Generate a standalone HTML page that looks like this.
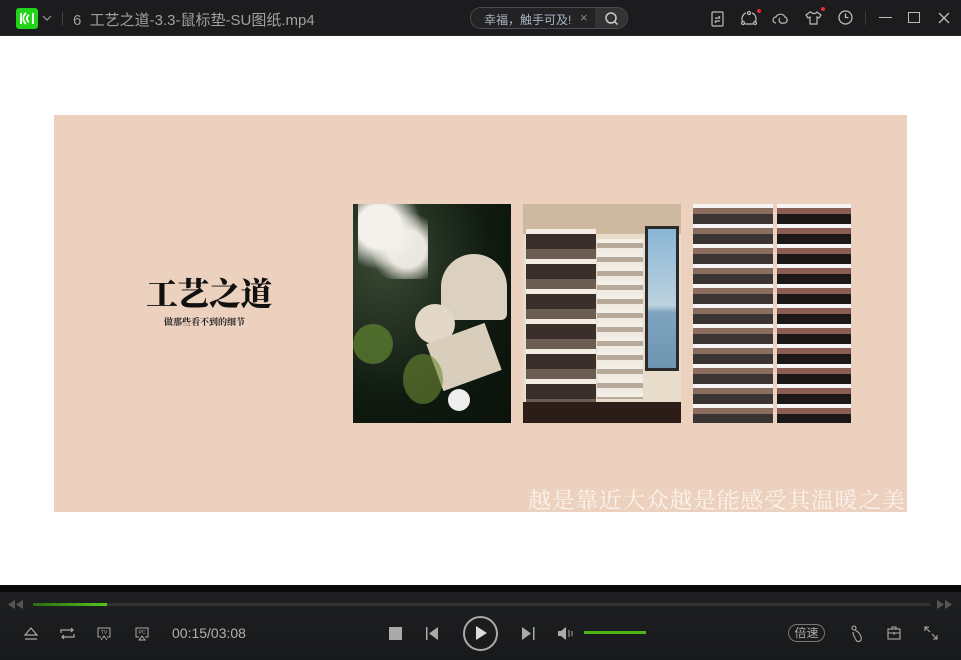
<!DOCTYPE html>
<html><head><meta charset="utf-8"><style>
*{margin:0;padding:0;box-sizing:border-box}
body{width:961px;height:660px;overflow:hidden;background:#fff;font-family:"Liberation Sans","Noto Sans CJK SC",sans-serif;position:relative}
.abs{position:absolute}
#top{left:0;top:0;width:961px;height:36px;background:#1c1c1e;border-bottom:1px solid #2a2a2c}
#ctrl{left:0;top:585px;width:961px;height:75px;background:linear-gradient(#0a0a0a 0,#0a0a0a 7px,#1e1f21 7px,#18191b 100%)}
.gray{color:#a8a8a8}
svg{position:absolute;overflow:visible}
</style></head><body>
<div id="top" class="abs">
  <div class="abs" style="left:16px;top:8px;width:22px;height:21px;background:#23d319;border-radius:3px"></div>
  <svg style="left:16px;top:8px" width="22" height="21" fill="none" stroke="#fff" stroke-width="1.8"><path d="M5 5v11"/><path d="M10 5a7 7 0 0 0 0 11M13 7a4 4 0 0 0 0 7"/><path d="M17 5v11"/></svg>
  <svg style="left:42px;top:15px" width="10" height="6"><path d="M1 1l4 4 4-4" fill="none" stroke="#999" stroke-width="1.2"/></svg>
  <div class="abs" style="left:62px;top:12px;width:1px;height:13px;background:#444"></div>
  <div class="abs gray" style="left:73px;top:9px;font-size:15px;color:#a0a0a0">6&nbsp; 工艺之道-3.3-鼠标垫-SU图纸.mp4</div>
  <div class="abs" style="left:470px;top:7px;width:158px;height:22px;border:1px solid #4a4a4c;border-radius:11px;background:#232325;overflow:hidden">
    <div class="abs" style="left:124px;top:0;width:34px;height:22px;background:#333335"></div>
    <div class="abs" style="left:13px;top:3px;font-size:12px;color:#a8b4c2">幸福，触手可及!</div>
    <div class="abs" style="left:109px;top:2px;font-size:13px;color:#888">×</div>
    <svg style="left:134px;top:4px" width="14" height="14"><circle cx="6" cy="6" r="5" fill="none" stroke="#ccc" stroke-width="1.5"/><path d="M9.5 9.5l3 3" stroke="#ccc" stroke-width="1.5"/></svg>
  </div>
  <svg style="left:711px;top:10px" width="14" height="17" fill="none" stroke="#bbb" stroke-width="1.2"><rect x="1" y="2" width="11" height="14" rx="1"/><path d="M4 8h5M4 11h5M8 6l1 2M5 13l-1-2"/></svg>
  <svg style="left:741px;top:11px" width="16" height="14" fill="none" stroke="#bbb" stroke-width="1.2"><path d="M5 2a6 6 0 0 0-3 9M11 2a6 6 0 0 1 3 9M4 13h8"/><circle cx="8" cy="2" r="1.5"/><circle cx="2" cy="12" r="1.5"/><circle cx="14" cy="12" r="1.5"/></svg>
  <div class="abs" style="left:757px;top:9px;width:4px;height:4px;border-radius:2px;background:#f0272b"></div>
  <svg style="left:773px;top:11px" width="16" height="14" fill="none" stroke="#bbb" stroke-width="1.2"><path d="M3 12a3 3 0 0 1 0-6a5 5 0 0 1 9 0a3 3 0 0 1-2 6a3 3 0 0 1-3-5"/></svg>
  <svg style="left:805px;top:11px" width="16" height="14" fill="none" stroke="#bbb" stroke-width="1.2"><path d="M5 1L1 4l2 3 2-1v7h7V6l2 1 2-3-4-3c-1 2-5 2-6 0z"/></svg>
  <div class="abs" style="left:821px;top:7px;width:4px;height:4px;border-radius:2px;background:#f0272b"></div>
  <svg style="left:838px;top:10px" width="15" height="15" fill="none" stroke="#bbb" stroke-width="1.3"><circle cx="7.5" cy="7.5" r="6.5"/><path d="M7.5 3.5v4h3"/></svg>
  <div class="abs" style="left:865px;top:11px;width:1px;height:14px;background:#3a3a3a"></div>
  <div class="abs" style="left:879px;top:17px;width:13px;height:1.3px;background:#bbb"></div>
  <div class="abs" style="left:908px;top:12px;width:12px;height:11px;border:1.3px solid #bbb"></div>
  <svg style="left:938px;top:12px" width="12" height="12"><path d="M1 1l10 10M11 1L1 11" stroke="#bbb" stroke-width="1.3"/></svg>
</div>

<!-- video -->
<div class="abs" style="left:54px;top:115px;width:853px;height:397px;background:#ecd1be">
  <div class="abs" style="left:92px;top:154px;font-family:'Noto Serif CJK SC','Liberation Serif',serif;font-weight:900;font-size:32px;color:#111;letter-spacing:-0.5px">工艺之道</div>
  <div class="abs" style="left:110px;top:200px;font-family:'Noto Serif CJK SC',serif;font-weight:700;font-size:9px;color:#222">做那些看不到的细节</div>
  <!-- img1 -->
  <div class="abs" style="left:299px;top:89px;width:158px;height:219px;background:radial-gradient(ellipse at 20% 25%,#3a4a34,#0f1a10 60%,#0b120b);overflow:hidden">
    <div class="abs" style="left:5px;top:0;width:70px;height:75px;background:radial-gradient(circle at 30% 30%,#f4f1ec 0 30%,transparent 60%),radial-gradient(circle at 70% 60%,#ece7e0 0 28%,transparent 55%);"></div>
    <div class="abs" style="left:88px;top:50px;width:66px;height:66px;border-radius:50% 50% 6px 6px;background:#dcd1c0"></div>
    <div class="abs" style="left:62px;top:100px;width:40px;height:40px;border-radius:50%;background:#e3d8c7"></div>
    <div class="abs" style="left:80px;top:128px;width:62px;height:50px;background:#d9cdbb;transform:rotate(-20deg)"></div>
    <div class="abs" style="left:0;top:120px;width:40px;height:40px;background:#5a7a2f;border-radius:50%;opacity:.8"></div>
    <div class="abs" style="left:50px;top:150px;width:40px;height:50px;background:#6d8a34;border-radius:50%;opacity:.6"></div>
    <div class="abs" style="left:95px;top:185px;width:22px;height:22px;border-radius:50%;background:#eee"></div>
  </div>
  <!-- img2 -->
  <div class="abs" style="left:469px;top:89px;width:158px;height:219px;background:#e8dccb;overflow:hidden">
    <div class="abs" style="left:0;top:0;width:158px;height:30px;background:#cdb9a0"></div>
    <div class="abs" style="left:3px;top:25px;width:70px;height:175px;background:repeating-linear-gradient(#f2ece2 0 5px,#3a2f2a 5px 20px,#6b5d52 20px 30px);"></div>
    <div class="abs" style="left:74px;top:35px;width:46px;height:160px;background:repeating-linear-gradient(#f4efe6 0 4px,#b8aa9a 4px 9px,#f0ebe2 9px 14px);"></div>
    <div class="abs" style="left:122px;top:22px;width:34px;height:145px;background:linear-gradient(#8ab6d6,#bdd2df 55%,#7fa4c0 60%,#6d94b0);border:3px solid #2a2a2a"></div>
    <div class="abs" style="left:0;top:198px;width:158px;height:21px;background:#2d1d18"></div>
  </div>
  <!-- img3 -->
  <div class="abs" style="left:639px;top:89px;width:80px;height:219px;background:repeating-linear-gradient(#f5f5f5 0 4px,#8a6d5f 4px 10px,#3a3432 10px 20px)"></div>
  <div class="abs" style="left:723px;top:89px;width:74px;height:219px;background:repeating-linear-gradient(#f5f5f5 0 4px,#8a5d55 4px 10px,#1c1818 10px 20px)"></div>
  <div class="abs" style="left:474px;top:369px;font-family:'Noto Serif CJK SC',serif;font-size:22px;color:#fbf3ec;white-space:nowrap;letter-spacing:0.5px;transform:scaleX(1.048);transform-origin:left">越是靠近大众越是能感受其温暖之美</div>
</div>

<div id="ctrl" class="abs">
  <svg style="left:8px;top:15px" width="16" height="9"><path d="M0 4.5l7-4.5v9zM8 4.5l7-4.5v9z" fill="#555"/></svg>
  <div class="abs" style="left:33px;top:18px;width:897px;height:3px;background:#333"></div>
  <div class="abs" style="left:33px;top:18px;width:74px;height:3px;background:linear-gradient(90deg,#2c6a12,#56c51d)"></div>
  <svg style="left:937px;top:15px" width="16" height="9"><path d="M0 0l7 4.5-7 4.5zM8 0l7 4.5-7 4.5z" fill="#555"/></svg>
  <svg style="left:24px;top:42px" width="14" height="13" fill="none" stroke="#aaa" stroke-width="1.2"><path d="M1 8L7 1l6 7zM1 12h12"/></svg>
  <svg style="left:60px;top:42px" width="15" height="13" fill="none" stroke="#aaa" stroke-width="1.2"><path d="M1 6V3h12M11 1l2 2-2 2M14 7v3H2M4 12l-2-2 2-2"/></svg>
  <svg style="left:97px;top:42px" width="14" height="13" fill="none" stroke="#aaa" stroke-width="1"><path d="M4 10H1V1h12v9h-3M4 13l3-4 3 4"/><text x="7" y="7" font-size="5" fill="#aaa" stroke="none" text-anchor="middle">TV</text></svg>
  <svg style="left:135px;top:42px" width="14" height="13" fill="none" stroke="#aaa" stroke-width="1"><path d="M4 10H1V1h12v9h-3M4 13l3-4 3 4z"/><text x="7" y="7" font-size="5" fill="#aaa" stroke="none" text-anchor="middle">PC</text></svg>
  <div class="abs" style="left:172px;top:40px;font-size:14px;color:#b0b0b0">00:15/03:08</div>
  <div class="abs" style="left:389px;top:42px;width:13px;height:13px;background:#aaa"></div>
  <svg style="left:426px;top:42px" width="13" height="13"><rect x="0" y="0" width="1.5" height="13" fill="#aaa"/><path d="M12 0v13L3 6.5z" fill="#aaa"/></svg>
  <div class="abs" style="left:463px;top:31px;width:35px;height:35px;border:2px solid #aaa;border-radius:50%"></div>
  <svg style="left:476px;top:41px" width="12" height="14"><path d="M0 0l11 7-11 7z" fill="#ddd"/></svg>
  <svg style="left:522px;top:42px" width="13" height="13"><path d="M0 0v13l9-6.5z" fill="#aaa"/><rect x="11" y="0" width="1.5" height="13" fill="#aaa"/></svg>
  <svg style="left:558px;top:42px" width="16" height="13"><path d="M0 4h3l5-4v13L3 9H0z" fill="#aaa"/><path d="M11 3v7M14 4v5" stroke="#aaa" stroke-width="1"/></svg>
  <div class="abs" style="left:584px;top:46px;width:62px;height:3px;background:#4cb617"></div>
  <div class="abs" style="left:788px;top:39px;width:37px;height:18px;border:1px solid #777;border-radius:9px;font-size:12px;color:#aaa;text-align:center;line-height:16px">倍速</div>
  <svg style="left:851px;top:40px" width="13" height="17" fill="none" stroke="#aaa" stroke-width="1.1"><circle cx="3" cy="3" r="2"/><path d="M4 5c4 2 7 6 6 10-1 2-4 2-5 0-1-3-3-4-3-8"/></svg>
  <svg style="left:887px;top:41px" width="14" height="14" fill="none" stroke="#aaa" stroke-width="1.1"><rect x="1" y="3" width="12" height="10"/><path d="M5 3V1h4v2M1 7h12M7 6v3"/></svg>
  <svg style="left:924px;top:41px" width="14" height="14" fill="none" stroke="#aaa" stroke-width="1.1"><path d="M1 5V1h4M1 1l5 5M13 9v4H9M13 13L8 8"/></svg>
</div>
</body></html>
